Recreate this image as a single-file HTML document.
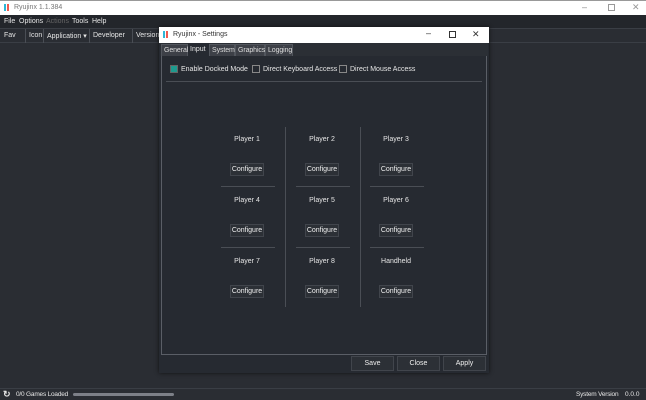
<!DOCTYPE html><html><head><style>
*{box-sizing:border-box;margin:0;padding:0}
body{width:646px;height:400px;background:#2a2d33;font-family:"Liberation Sans",sans-serif;font-size:7px;color:#e6e6e6;position:relative;overflow:hidden}
.a{position:absolute;white-space:nowrap}
.btn{position:absolute;border:1px solid #41454c;background:#2c3036;text-align:center;color:#eee;font-size:7px}
.sep{position:absolute;height:1px;background:#4a4e55}
.vs{position:absolute;width:1px;background:#4a4e55}
.lbl{position:absolute;width:60px;text-align:center;font-size:7px}
.tab{position:absolute;top:44px;height:12px;background:#3d4047;border:1px solid #52565d;border-bottom:none;padding:2px 0 0 2px;color:#ddd;font-size:7px;letter-spacing:-0.1px}
</style></head><body>
<div class="a" style="left:0;top:0;width:646px;height:15px;background:#fff;border-top:1px solid #999"></div>
<div class="a" style="left:4px;top:4px;width:2px;height:7px;background:#2eb6d6"></div>
<div class="a" style="left:7px;top:4px;width:2px;height:7px;background:#ef5a4f"></div>
<div class="a" style="left:14px;top:4px;color:#777;font-size:7px">Ryujinx 1.1.384</div>
<div class="a" style="left:582px;top:2px;color:#888;font-size:9px">–</div>
<div class="a" style="left:608px;top:4px;width:7px;height:7px;border:1px solid #999"></div>
<div class="a" style="left:632px;top:2px;color:#999;font-size:9px">✕</div>
<div class="a" style="left:0;top:15px;width:646px;height:13px;background:#23262b"></div>
<div class="a" style="left:4px;top:18px">File</div><div class="a" style="left:19px;top:18px">Options</div><div class="a" style="left:46px;top:18px;color:#666">Actions</div><div class="a" style="left:72px;top:18px">Tools</div><div class="a" style="left:92px;top:18px">Help</div>
<div class="a" style="left:0;top:28px;width:646px;height:15px;background:#2a2d33;border-top:1px solid #3a3e45;border-bottom:1px solid #3a3e45"></div>
<div class="a" style="left:4px;top:32px">Fav</div><div class="vs" style="left:25px;top:29px;height:14px"></div>
<div class="a" style="left:29px;top:32px">Icon</div><div class="vs" style="left:43px;top:29px;height:14px"></div>
<div class="a" style="left:47px;top:32px">Application ▾</div><div class="vs" style="left:89px;top:29px;height:14px"></div>
<div class="a" style="left:93px;top:32px">Developer</div><div class="vs" style="left:132px;top:29px;height:14px"></div>
<div class="a" style="left:136px;top:32px">Version</div>
<!-- settings window -->
<div class="a" style="left:159px;top:27px;width:330px;height:346px;background:#262a31;box-shadow:0 0 4px #111"></div>
<div class="a" style="left:159px;top:27px;width:330px;height:16px;background:#fff"></div>
<div class="a" style="left:163px;top:31px;width:2px;height:7px;background:#2eb6d6"></div>
<div class="a" style="left:166px;top:31px;width:2px;height:7px;background:#ef5a4f"></div>
<div class="a" style="left:173px;top:31px;color:#333">Ryujinx - Settings</div>
<div class="a" style="left:426px;top:28px;color:#333;font-size:9px">–</div>
<div class="a" style="left:449px;top:31px;width:7px;height:7px;border:1px solid #333"></div>
<div class="a" style="left:472px;top:29px;color:#333;font-size:9px">✕</div>
<div class="a" style="left:160px;top:43px;width:328px;height:13px;background:#2b2f35"></div>
<div class="tab" style="left:161px;width:27px">General</div>
<div class="a" style="left:188px;top:43px;width:21px;height:14px;background:#262a31;padding:3px 0 0 2px">Input</div>
<div class="tab" style="left:209px;width:26px">System</div>
<div class="tab" style="left:235px;width:30px">Graphics</div>
<div class="tab" style="left:265px;width:28px">Logging</div>
<div class="a" style="left:161px;top:56px;width:326px;height:299px;border:1px solid #5a5e66;border-top:none"></div>
<div class="a" style="left:170px;top:65px;width:8px;height:8px;background:#1e9a8e;border:1px solid #666"></div>
<div class="a" style="left:181px;top:66px">Enable Docked Mode</div>
<div class="a" style="left:252px;top:65px;width:8px;height:8px;border:1px solid #888"></div>
<div class="a" style="left:263px;top:66px">Direct Keyboard Access</div>
<div class="a" style="left:339px;top:65px;width:8px;height:8px;border:1px solid #888"></div>
<div class="a" style="left:350px;top:66px">Direct Mouse Access</div>
<div class="sep" style="left:166px;top:81px;width:316px"></div>
<div class="vs" style="left:285px;top:127px;height:180px"></div>
<div class="vs" style="left:360px;top:127px;height:180px"></div>
<div class="sep" style="left:221px;top:186px;width:54px"></div><div class="sep" style="left:296px;top:186px;width:54px"></div><div class="sep" style="left:370px;top:186px;width:54px"></div>
<div class="sep" style="left:221px;top:247px;width:54px"></div><div class="sep" style="left:296px;top:247px;width:54px"></div><div class="sep" style="left:370px;top:247px;width:54px"></div>
<div class="lbl" style="left:217px;top:136px">Player 1</div><div class="lbl" style="left:292px;top:136px">Player 2</div><div class="lbl" style="left:366px;top:136px">Player 3</div>
<div class="lbl" style="left:217px;top:197px">Player 4</div><div class="lbl" style="left:292px;top:197px">Player 5</div><div class="lbl" style="left:366px;top:197px">Player 6</div>
<div class="lbl" style="left:217px;top:258px">Player 7</div><div class="lbl" style="left:292px;top:258px">Player 8</div><div class="lbl" style="left:366px;top:258px">Handheld</div>
<div class="btn" style="left:230px;top:163px;width:34px;height:13px;padding-top:2px">Configure</div><div class="btn" style="left:305px;top:163px;width:34px;height:13px;padding-top:2px">Configure</div><div class="btn" style="left:379px;top:163px;width:34px;height:13px;padding-top:2px">Configure</div>
<div class="btn" style="left:230px;top:224px;width:34px;height:13px;padding-top:2px">Configure</div><div class="btn" style="left:305px;top:224px;width:34px;height:13px;padding-top:2px">Configure</div><div class="btn" style="left:379px;top:224px;width:34px;height:13px;padding-top:2px">Configure</div>
<div class="btn" style="left:230px;top:285px;width:34px;height:13px;padding-top:2px">Configure</div><div class="btn" style="left:305px;top:285px;width:34px;height:13px;padding-top:2px">Configure</div><div class="btn" style="left:379px;top:285px;width:34px;height:13px;padding-top:2px">Configure</div>
<div class="btn" style="left:351px;top:356px;width:43px;height:15px;padding-top:3px">Save</div>
<div class="btn" style="left:397px;top:356px;width:43px;height:15px;padding-top:3px">Close</div>
<div class="btn" style="left:443px;top:356px;width:43px;height:15px;padding-top:3px">Apply</div>
<!-- status -->
<div class="sep" style="left:0;top:388px;width:646px;background:#3a3e45"></div>
<div class="a" style="left:3px;top:389px;font-size:9px;font-weight:bold">↻</div>
<div class="a" style="left:16px;top:391px;font-size:6.5px;letter-spacing:-0.2px">0/0 Games Loaded</div>
<div class="a" style="left:73px;top:393px;width:101px;height:3px;background:#7d8088;border-radius:2px"></div>
<div class="a" style="left:576px;top:391px;font-size:6.5px;letter-spacing:-0.2px">System Version</div>
<div class="a" style="left:625px;top:391px;font-size:6.5px">0.0.0</div>
</body></html>
